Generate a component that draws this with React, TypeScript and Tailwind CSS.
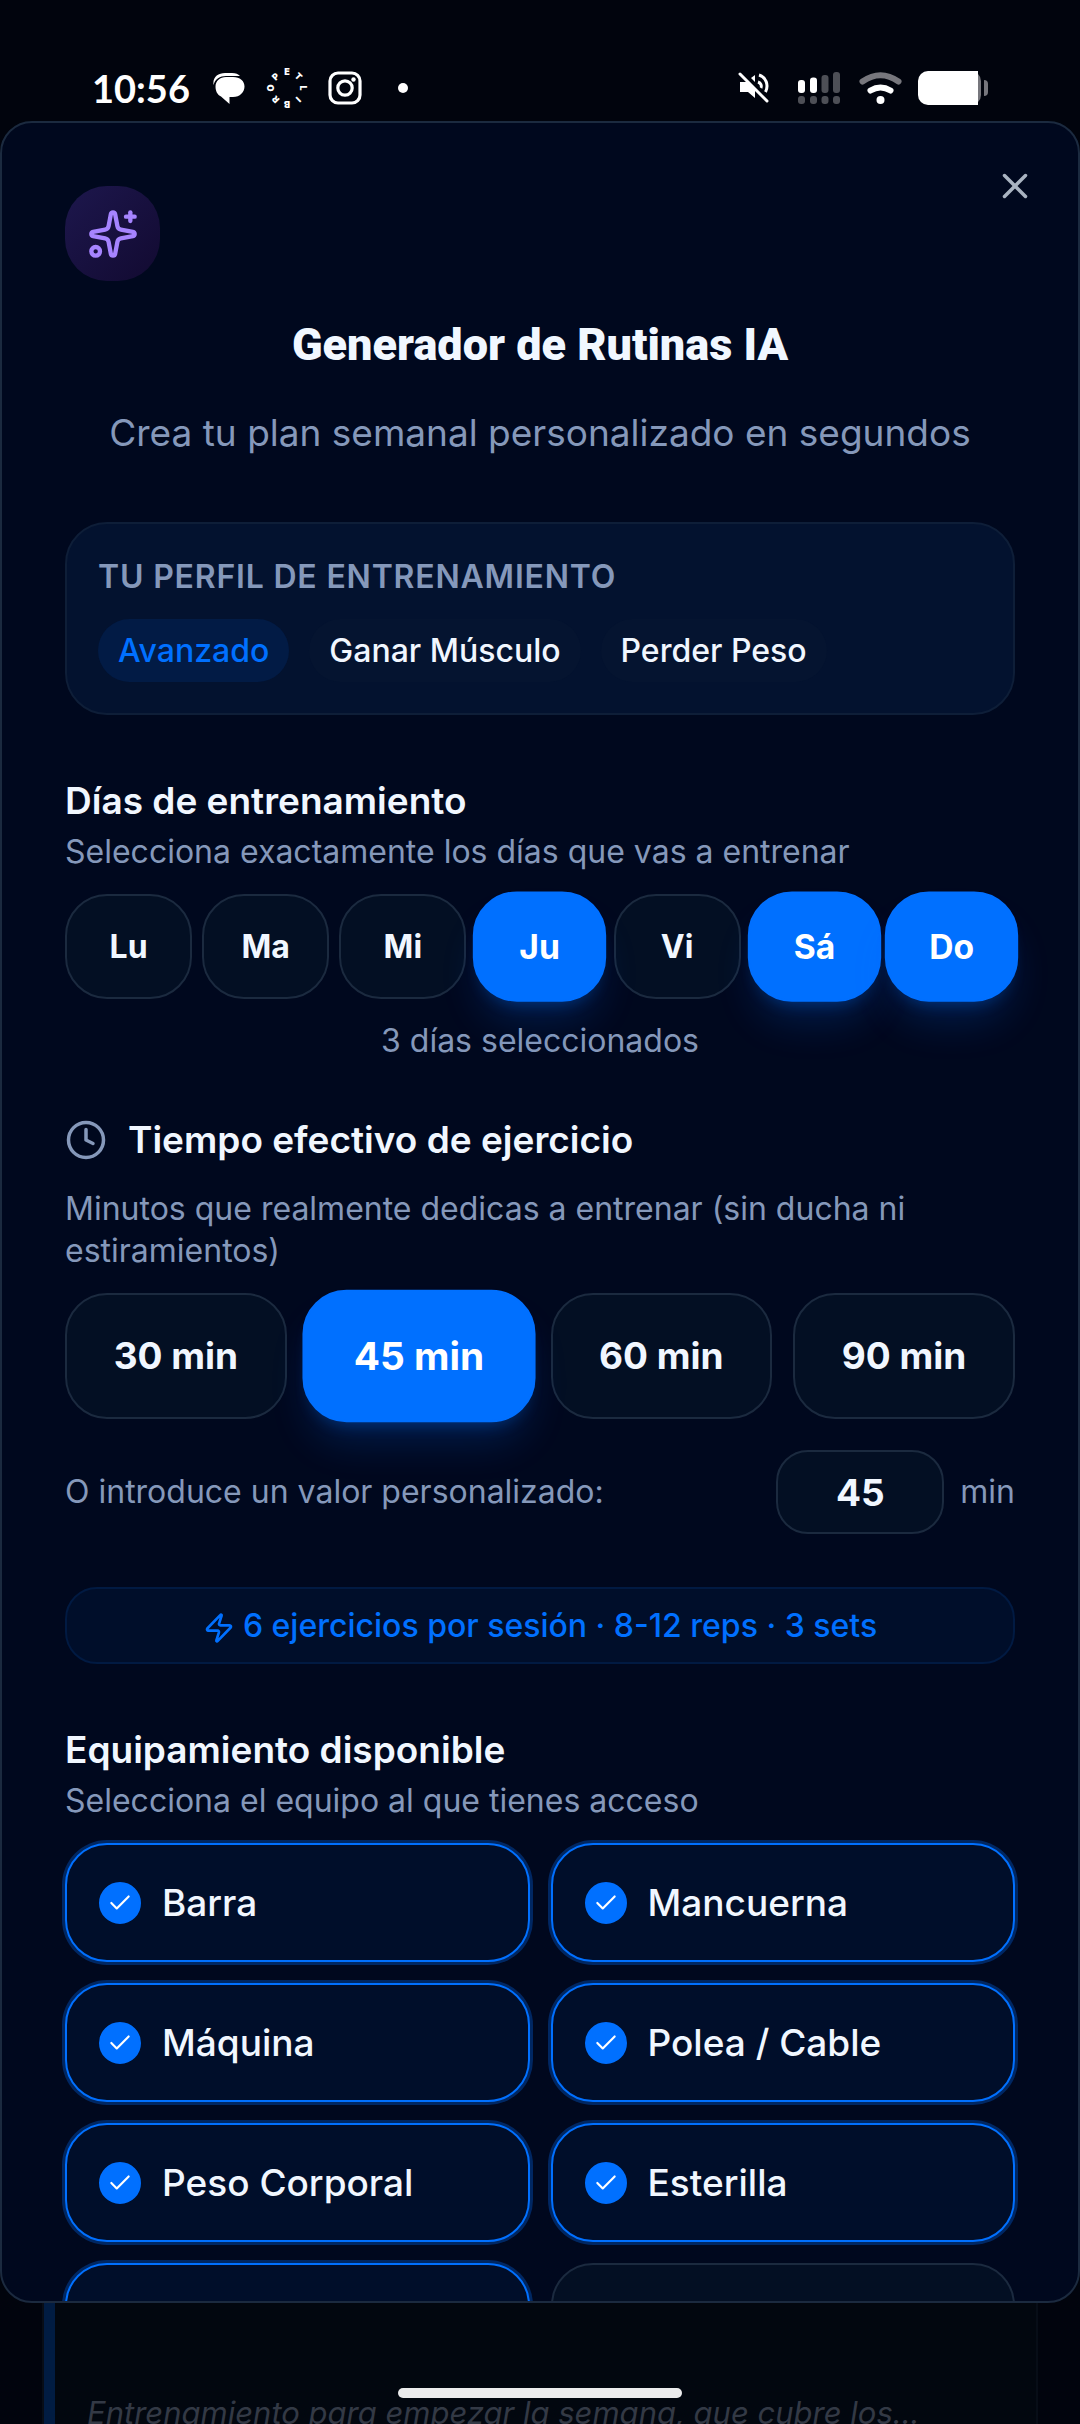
import React, { useState } from "react";
import { Check, Clock, Sparkles, X, Zap } from "lucide-react";
import clsx from "clsx";

const days = ["Lu", "Ma", "Mi", "Ju", "Vi", "Sá", "Do"];
const durations = [30, 45, 60, 90];
const profile = ["Avanzado", "Ganar Músculo", "Perder Peso"];

const equipment = [
  { id: "barbell", name: "Barra" },
  { id: "dumbbell", name: "Mancuerna" },
  { id: "machine", name: "Máquina" },
  { id: "cable", name: "Polea / Cable" },
  { id: "bodyweight", name: "Peso Corporal" },
  { id: "mat", name: "Esterilla" },
  { id: "extra-1", name: "" },
  { id: "extra-2", name: "" },
];

const ringLetters = ["E", "T", "L", "I", "B", "R", "O", "P"];

const StatusBar = () => (
  <header className="flex h-[121px] shrink-0 items-center justify-between px-[92px] pt-[55px] text-white">
    <div className="flex items-center">
      <span className="w-[95px] font-['Lato',sans-serif] text-[38px] leading-[40px] font-bold">10:56</span>
      {/* messages */}
      <svg className="ml-[26px]" width="32" height="32" viewBox="0 0 32 32" fill="currentColor">
        <path d="M0.500 13C-0.500 5 5 1 12 1h7c4 0 6 1 8 3H13C7 4 2 7 0.500 13z" />
        <path d="M13 5h7c7 0 11.500 4 11.500 9.500S27 25 20 25h-3.500v7L8 24.500C4.500 23 2.500 19 2.500 14.500 2.500 9 7 5 13 5z" />
      </svg>
      <svg className="ml-[17px]" width="50" height="50" viewBox="0 0 50 50" fill="currentColor">
        {ringLetters.map((letter, i) => (
          <text
            key={letter}
            x="25"
            y="12"
            textAnchor="middle"
            transform={`rotate(${i * 45} 25 25)`}
            className="font-['Inter',sans-serif] text-[9px] font-black"
          >
            {letter}
          </text>
        ))}
      </svg>
      <svg className="ml-4" width="34" height="34" viewBox="0 0 34 34" fill="none" stroke="currentColor">
        <rect x="2" y="2" width="30" height="30" rx="8" strokeWidth="3.2" />
        <circle cx="17" cy="17" r="7.200" strokeWidth="3.200" />
        <circle cx="25.500" cy="8.500" r="2.200" fill="currentColor" stroke="none" />
      </svg>
      <span className="ml-[36px] size-[10px] rounded-full bg-white" />
    </div>

    <div className="flex items-center">
      {/* muted */}
      <svg width="32" height="32" viewBox="0 0 32 32" fill="none" stroke="currentColor">
        <path d="M2 10h7l8 8v8l-7-6H2z" fill="currentColor" stroke="none" />
        <path d="M13 6l4-3v7z" fill="currentColor" stroke="none" />
        <path d="M20 10c3 1 4 4 3 6" strokeWidth="3" />
        <path d="M21 3c7 2 10 10 6.500 17" strokeWidth="3" />
        <path d="M4.500 0L32 27.500" stroke="#01040d" strokeWidth="2" />
        <path d="M2 2l27 27" strokeWidth="3" strokeLinecap="round" />
      </svg>
      {/* dual sim signal */}
      <svg className="ml-[28px]" width="42" height="33" viewBox="0 0 42 33">
        <rect x="0" y="8" width="7" height="13" rx="3" fill="#fff" />
        <rect x="12" y="5.500" width="7" height="15.500" rx="3" fill="#fff" />
        <rect x="23.500" y="3" width="7" height="18" rx="3" fill="#4d4f56" />
        <rect x="35" y="0" width="7" height="21" rx="3" fill="#4d4f56" />
        {[0, 12, 23.5, 35].map((x) => (
          <rect key={x} x={x} y="24" width="7" height="8" rx="3" fill="#4d4f56" />
        ))}
      </svg>
      <svg className="ml-[19px]" width="43" height="33" viewBox="0 0 43 33" fill="none" strokeLinecap="round">
        <path d="M3.500 9.500Q21.500-3 39.500 9.500" stroke="#77777d" strokeWidth="6" />
        <path d="M11.500 18.500Q21.500 12.500 31.500 18.500" stroke="#fff" strokeWidth="6" />
        <circle cx="21.500" cy="28" r="4" fill="#fff" />
      </svg>
      <svg className="ml-[16px]" width="70" height="34" viewBox="0 0 70 34">
        <rect x="4" y="0" width="59" height="34" rx="10" fill="#77777d" />
        <path d="M10 0h50v34H10A10 10 0 0 1 0 24V10A10 10 0 0 1 10 0z" fill="#fff" />
        <path d="M66 9a4 4 0 0 1 4 4v8a4 4 0 0 1-4 4z" fill="#77777d" />
      </svg>
    </div>
  </header>
);

const SectionHeading = ({ title, hint }: { title: string; hint: string }) => (
  <div className="flex flex-col gap-[9px]">
    <h2 className="text-[37px] leading-[42px] font-semibold">{title}</h2>
    <p className="text-[32px] leading-[42px] text-[#8598ba]">{hint}</p>
  </div>
);

const optionClass = (selected: boolean) =>
  clsx(
    "rounded-[42px] border-2",
    selected
      ? "relative scale-105 border-[#0070ff] bg-[#0070ff] text-white shadow-[0_26px_39px_-8px_rgba(0,112,255,0.2),0_10px_16px_-10px_rgba(0,112,255,0.4)]"
      : "border-[#1b2a3f] bg-[#030f23]"
  );

const App = () => {
  const [selectedDays, setSelectedDays] = useState(["Ju", "Sá", "Do"]);
  const [minutes, setMinutes] = useState("45");
  const [owned, setOwned] = useState(equipment.slice(0, 7).map((item) => item.id));

  const toggle = (list: string[], value: string) =>
    list.includes(value) ? list.filter((v) => v !== value) : [...list, value];

  return (
    <div className="flex h-screen flex-col overflow-hidden bg-[#01040d] font-['Inter',sans-serif] text-[#f1f7ff]">
      <StatusBar />

      <main className="relative min-h-0 flex-1 overflow-hidden rounded-[32px] border-2 border-[#1b2a3f] bg-[#00081e]">
        <button type="button" aria-label="Cerrar" className="absolute top-[42px] right-[42px] text-[#a9b3c1]">
          <X size={42} />
        </button>

        <div className="h-full overflow-y-auto px-[63px] pt-[63px] [scrollbar-width:none]">
          <div className="flex size-[95px] items-center justify-center rounded-[42px] bg-linear-to-br from-[#1d174d] to-[#120a31] text-[#a684ff]">
            <Sparkles size={52} />
          </div>
          <h1 className="mt-[38px] text-center font-['Roboto',sans-serif] text-[45px] leading-[52px] font-black">
            Generador de Rutinas IA
          </h1>
          <p className="mt-9 text-center text-[37px] leading-[52px] text-[#8598ba]">
            Crea tu plan semanal personalizado en segundos
          </p>

          <section className="mt-[63px] rounded-[42px] border-2 border-[#0e1e38] bg-[#03122f] px-[31px] pt-8 pb-[31px]">
            <h2 className="text-[32px] leading-[42px] font-semibold tracking-wide text-[#8598ba] uppercase">
              Tu perfil de entrenamiento
            </h2>
            <div className="mt-[21px] flex flex-wrap gap-5">
              {profile.map((tag, index) => (
                <span
                  key={tag}
                  className={clsx(
                    "rounded-full px-5 text-[32px] leading-[63px] font-medium",
                    index === 0 ? "bg-[#021b45] text-[#0070ff]" : "bg-[#051430]"
                  )}
                >
                  {tag}
                </span>
              ))}
            </div>
          </section>

          <section className="mt-[65px]">
            <SectionHeading title="Días de entrenamiento" hint="Selecciona exactamente los días que vas a entrenar" />
            <div className="mt-[21px] grid grid-cols-7 gap-[10px]">
              {days.map((day) => (
                <button
                  key={day}
                  type="button"
                  aria-pressed={selectedDays.includes(day)}
                  onClick={() => setSelectedDays(toggle(selectedDays, day))}
                  className={clsx("h-[105px] text-[32px] font-bold", optionClass(selectedDays.includes(day)))}
                >
                  {day}
                </button>
              ))}
            </div>
            <p className="mt-[21px] text-center text-[32px] leading-[42px] text-[#8598ba]">
              {selectedDays.length} días seleccionados
            </p>
          </section>

          <section className="mt-[57px]">
            <h2 className="flex items-center gap-[21px] text-[37px] leading-[42px] font-semibold">
              <Clock size={42} className="text-[#8598ba]" />
              Tiempo efectivo de ejercicio
            </h2>
            <p className="mt-[27px] text-[32px] leading-[42px] text-[#8598ba]">
              Minutos que realmente dedicas a entrenar (sin ducha ni estiramientos)
            </p>
            <div className="mt-[21px] grid grid-cols-4 gap-[21px]">
              {durations.map((value) => (
                <button
                  key={value}
                  type="button"
                  aria-pressed={minutes === String(value)}
                  onClick={() => setMinutes(String(value))}
                  className={clsx("h-[126px] text-[37px] font-bold", optionClass(minutes === String(value)))}
                >
                  {value} min
                </button>
              ))}
            </div>
            <div className="mt-[31px] flex items-center gap-4 text-[32px] text-[#8598ba]">
              <label htmlFor="minutes" className="flex-1">
                O introduce un valor personalizado:
              </label>
              <input
                id="minutes"
                inputMode="numeric"
                value={minutes}
                onChange={(e) => setMinutes(e.target.value)}
                className="h-[84px] w-[168px] rounded-[32px] border-2 border-[#1b2a3f] bg-[#030f23] text-center text-[37px] font-bold text-[#f1f7ff]"
              />
              <span>min</span>
            </div>
          </section>

          <p className="mt-[53px] flex h-[77px] items-center justify-center gap-2 rounded-[32px] border-2 border-[#011a42] bg-[#000e2a] text-[32px] font-medium text-[#0070ff]">
            <Zap size={32} className="mt-1" />
            6 ejercicios por sesión · 8-12 reps · 3 sets
          </p>

          <section className="mt-[65px] pb-[63px]">
            <SectionHeading title="Equipamiento disponible" hint="Selecciona el equipo al que tienes acceso" />
            <div className="mt-[21px] grid grid-cols-2 gap-[21px]">
              {equipment.map((item) => {
                const checked = owned.includes(item.id);
                return (
                  <label
                    key={item.id}
                    className={clsx(
                      "flex h-[119px] items-center gap-[21px] rounded-[42px] border-2 px-8 text-[37px] font-medium",
                      checked
                        ? "border-[#0070ff] bg-[#000e2a] shadow-[0_0_0_3px_#002762]"
                        : "border-[#1b2a3f] bg-[#030f23]"
                    )}
                  >
                    <span className="grid size-[42px] place-items-center">
                      <input
                        type="checkbox"
                        checked={checked}
                        onChange={() => setOwned(toggle(owned, item.id))}
                        className="col-start-1 row-start-1 size-[42px] appearance-none rounded-full border-2 border-[#1b2a3f] checked:border-[#0070ff] checked:bg-[#0070ff]"
                      />
                      {checked && (
                        <Check size={26} className="pointer-events-none col-start-1 row-start-1 text-white" />
                      )}
                    </span>
                    {item.name}
                  </label>
                );
              })}
            </div>
          </section>
        </div>
      </main>

      {/* routine card behind the dialog */}
      <div className="relative h-[121px] shrink-0 overflow-hidden px-[42px]">
        <div className="h-full border-x-2 border-[#070d17] bg-[#02070f]">
          <div className="h-full border-l-[11px] border-[#011c42] pt-[89px] pl-8">
            <p className="truncate text-[31px] leading-[42px] text-[#333945] italic">
              Entrenamiento para empezar la semana, que cubre los...
            </p>
          </div>
        </div>
        <div className="absolute inset-x-0 top-[85px] mx-auto h-[10px] w-[284px] rounded-full bg-[#ececed]" />
      </div>
    </div>
  );
};

export default App;
